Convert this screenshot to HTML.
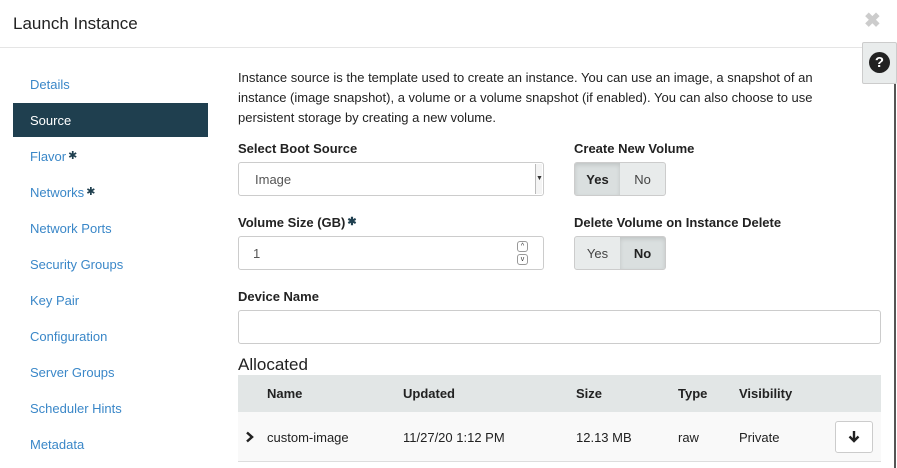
<!DOCTYPE html>
<html><head><style>
*{box-sizing:border-box;margin:0;padding:0}
body{width:897px;height:468px;overflow:hidden;background:#fff;font-family:"Liberation Sans",sans-serif;font-size:13px;color:#333;position:relative}
.a{position:absolute}
.nav{position:absolute;left:30px;color:#3a87c8;font-size:13px}
.lbl{position:absolute;font-weight:bold;font-size:13px;color:#222}
.star{font-size:11px;color:#1f3f4f;vertical-align:top;margin-left:2px}
.inp{position:absolute;border:1px solid #ccc;border-radius:3px;background:#fff}
.tg{position:absolute;height:34px;display:flex;border:1px solid #ccc;border-radius:3px;overflow:hidden;background:#e8ebeb}
.tg div{width:45px;display:flex;align-items:center;justify-content:center;font-size:13px;color:#444}
.tg .on{background:#dadfdf;font-weight:bold;color:#222;box-shadow:inset 0 2px 4px rgba(0,0,0,.12)}
</style></head><body>
<div class="a" style="left:13px;top:14px;font-size:17px;color:#222">Launch Instance</div>
<div class="a" style="left:864px;top:8px;font-size:20px;color:#ccc;font-weight:bold">✖</div>
<div class="a" style="left:0;top:47px;width:897px;height:1px;background:#e5e5e5"></div>
<div class="a" style="left:862px;top:42px;width:35px;height:42px;background:#e9ecec;border:1px solid #ccc;border-radius:2px"></div>
<div class="a" style="left:869px;top:52px;width:21px;height:21px;border-radius:50%;background:#222;color:#fff;font-weight:bold;font-size:15px;text-align:center;line-height:21px">?</div>
<div class="a" style="left:894px;top:84px;width:2px;height:384px;background:#555"></div>

<div class="nav" style="top:77px">Details</div>
<div class="a" style="left:13px;top:103px;width:195px;height:34px;background:#1f3f4f"></div>
<div class="nav" style="top:113px;color:#fff">Source</div>
<div class="nav" style="top:149px">Flavor<span class="star">✱</span></div>
<div class="nav" style="top:185px">Networks<span class="star">✱</span></div>
<div class="nav" style="top:221px">Network Ports</div>
<div class="nav" style="top:257px">Security Groups</div>
<div class="nav" style="top:293px">Key Pair</div>
<div class="nav" style="top:329px">Configuration</div>
<div class="nav" style="top:365px">Server Groups</div>
<div class="nav" style="top:401px">Scheduler Hints</div>
<div class="nav" style="top:437px">Metadata</div>

<div class="a" style="left:238px;top:68px;width:600px;line-height:20px;color:#222">Instance source is the template used to create an instance. You can use an image, a snapshot of an instance (image snapshot), a volume or a volume snapshot (if enabled). You can also choose to use persistent storage by creating a new volume.</div>

<div class="lbl" style="left:238px;top:141px">Select Boot Source</div>
<div class="inp" style="left:238px;top:162px;width:306px;height:34px;padding:9px 16px;color:#555">Image</div>
<div class="a" style="left:535px;top:164px;width:7px;height:30px;border-left:1px solid #bbb;background:#f4f4f4;font-size:7px;line-height:30px;text-align:center">▼</div>
<div class="lbl" style="left:574px;top:141px">Create New Volume</div>
<div class="tg" style="left:574px;top:162px"><div class="on">Yes</div><div>No</div></div>

<div class="lbl" style="left:238px;top:215px">Volume Size (GB)<span class="star">✱</span></div>
<div class="inp" style="left:238px;top:236px;width:306px;height:34px;padding:9px 14px;color:#555">1</div>
<div class="a" style="left:517px;top:241px;width:11px;height:11px;border:1px solid #999;border-radius:3px;font-size:7px;text-align:center;line-height:10px">^</div>
<div class="a" style="left:517px;top:254px;width:11px;height:11px;border:1px solid #999;border-radius:3px;font-size:7px;text-align:center;line-height:10px">v</div>
<div class="lbl" style="left:574px;top:215px">Delete Volume on Instance Delete</div>
<div class="tg" style="left:574px;top:236px"><div>Yes</div><div class="on">No</div></div>

<div class="lbl" style="left:238px;top:289px">Device Name</div>
<div class="inp" style="left:238px;top:310px;width:643px;height:34px"></div>

<div class="a" style="left:238px;top:355px;font-size:17px;color:#222">Allocated</div>
<div class="a" style="left:238px;top:375px;width:643px;height:37px;background:#e2e6e6"></div>
<div class="lbl" style="left:267px;top:386px">Name</div>
<div class="lbl" style="left:403px;top:386px">Updated</div>
<div class="lbl" style="left:576px;top:386px">Size</div>
<div class="lbl" style="left:678px;top:386px">Type</div>
<div class="lbl" style="left:739px;top:386px">Visibility</div>
<div class="a" style="left:238px;top:412px;width:643px;height:50px;background:#f9f9f9;border-bottom:1px solid #ddd"></div>
<svg class="a" style="left:245px;top:431px" width="9" height="12" viewBox="0 0 9 12"><path d="M2 1.5 L7 6 L2 10.5" stroke="#222" stroke-width="2.5" fill="none"/></svg>
<div class="a" style="left:267px;top:430px;color:#222">custom-image</div>
<div class="a" style="left:403px;top:430px;color:#222">11/27/20 1:12 PM</div>
<div class="a" style="left:576px;top:430px;color:#222">12.13 MB</div>
<div class="a" style="left:678px;top:430px;color:#222">raw</div>
<div class="a" style="left:739px;top:430px;color:#222">Private</div>
<div class="a" style="left:835px;top:421px;width:38px;height:32px;border:1px solid #ccc;border-radius:3px;background:#fff"></div>
<svg class="a" style="left:848px;top:430px" width="12" height="13" viewBox="0 0 12 13"><path d="M6 1 V11 M1.5 6.5 L6 11 L10.5 6.5" stroke="#222" stroke-width="2.4" fill="none"/></svg>
</body></html>
